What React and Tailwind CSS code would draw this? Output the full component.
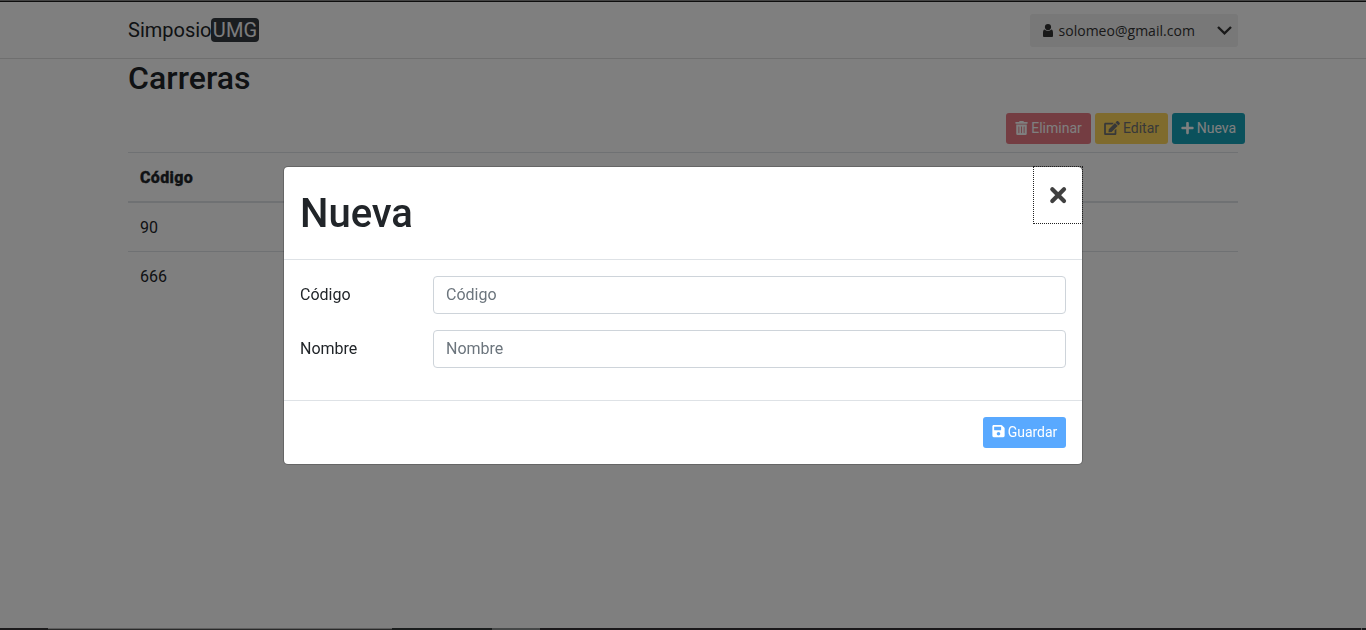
import React from "react";
import { FaTrashAlt, FaEdit, FaPlus, FaSave } from "react-icons/fa";

const rows = ["90", "666"];

function UserIcon() {
  return (
    <svg className="h-[13px] w-[10px]" viewBox="0 0 10 13" fill="#333">
      <circle cx="5" cy="3.1" r="3.1" />
      <path d="M1.600 5.600C2.400 6.500 3.600 7 5 7s2.600-.5 3.400-1.400C9.500 5.800 10 7 10 8.800V11.800c0 .8-.4 1.200-1.200 1.200H1.200C.4 13 0 12.600 0 11.800V8.800C0 7 .5 5.800 1.600 5.600z" />
    </svg>
  );
}

function Navbar() {
  return (
    <nav className="h-[57px] border-b border-[#dedede]">
      <div className="mx-auto flex h-[56px] w-[1110px] items-center justify-between">
        <div className="flex items-center text-[20px] leading-[30px]">
          <span className="w-[83px]">Simposio</span>
          <span className="flex h-6 w-12 items-center justify-center rounded bg-[#343a40] tracking-[0.1px] text-[#f8f9fa]">UMG</span>
        </div>
        <button className="flex h-[33px] w-[208px] items-center rounded-[3px] bg-[#f0f0f0] pr-[6px] pl-[13px] font-['Open_Sans',sans-serif] text-[14px] text-[#333]">
          <UserIcon />
          <span className="mt-px ml-[5.5px] tracking-[0.02px]">solomeo@gmail.com</span>
          <svg className="ml-auto h-[9px] w-[15px]" viewBox="0 0 15 9" fill="none" stroke="#333" strokeWidth="2.4">
            <path d="M1 1l6.500 6.300L14 1" />
          </svg>
        </button>
      </div>
    </nav>
  );
}

function Toolbar() {
  const base = "flex h-[31px] items-center justify-center gap-[3px] rounded-[3px] text-[14px] leading-[21px]";
  return (
    <div className="-mr-[7px] mt-4 flex justify-end gap-1">
      <button className={base + " w-[85px] bg-[#dc3545] text-white opacity-65"}><FaTrashAlt className="mb-px w-[13px]" />Eliminar</button>
      <button className={base + " w-[73px] bg-[#ffc107] text-[#212529] opacity-65"}><FaEdit className="mb-px w-[16px]" />Editar</button>
      <button className={base + " w-[73px] bg-[#17a2b8] text-white"}><FaPlus className="mb-px w-[13px]" />Nueva</button>
    </div>
  );
}

function Field({ label }) {
  return (
    <div className="mb-4 flex items-center">
      <label className="w-[133px]">{label}</label>
      <input placeholder={label} className="h-[38px] flex-1 rounded border border-[#ced4da] bg-white px-3 pb-[2px] text-[16px] placeholder:text-[#6c757d]" />
    </div>
  );
}

function Modal() {
  return (
    <div className="fixed inset-0 flex items-start justify-center bg-black/50 pt-[166px]">
      <section className="w-[800px] rounded-[5px] border border-black/20 bg-white bg-clip-padding">
        <header className="flex h-[93px] justify-between border-b border-[#dee2e6] pl-4">
          <h4 className="mt-[17px] text-[40px] leading-[60px] font-medium">Nueva</h4>
          <button aria-label="Cerrar" className="-mt-px -mr-px flex h-[58px] w-[50px] items-center justify-center border border-dotted border-[#222]">
            <svg className="h-[18px] w-[18px]" viewBox="0 0 18 18" fill="none" stroke="#404040" strokeWidth="4.2" strokeLinecap="round">
              <path d="M3.300 3.300l11.700 11.700M15 3.300L3.300 15" />
            </svg>
          </button>
        </header>
        <div className="p-4">
          <Field label="Código" />
          <Field label="Nombre" />
        </div>
        <footer className="flex justify-end border-t border-[#dee2e6] p-4">
          <button className="flex h-[31px] w-[83px] items-center justify-center gap-[3px] rounded-[3px] bg-[#59a9ff] text-[14px] leading-[21px] text-white">
            <FaSave className="mb-[3px] w-[13px]" />Guardar
          </button>
        </footer>
      </section>
    </div>
  );
}

export default function App() {
  return (
    <div className="flex h-[630px] flex-col overflow-hidden bg-white font-[Roboto,sans-serif] text-[16px] leading-6 text-[#212529]">
      <div className="h-[2px] border-b border-[#1c1c1c] bg-[#888]" />
      <Navbar />
      <main className="mx-auto w-[1110px]">
        <h2 className="text-[32px] leading-[38px] font-medium tracking-[0.06px]">Carreras</h2>
        <Toolbar />
        <div className="mt-2">
          <div className="flex h-[51px] items-center border-t border-b-2 border-[#dee2e6] px-3 pt-[2px] font-extrabold tracking-[0.35px] [-webkit-text-stroke:0.4px_#212529]">Código</div>
          {rows.map((r, i) => (
            <div key={r} className={i ? "flex h-[49px] items-center border-t border-[#dee2e6] px-3 pt-[2px]" : "flex h-[48px] items-center px-3 pt-[2px]"}>{r}</div>
          ))}
        </div>
      </main>
      <div className="mt-auto flex h-[2px]">
        <div className="w-12 bg-[#393639]" />
        <div className="w-[344px] border-t border-[#bbb] bg-[#555]" />
        <div className="w-[100px] bg-[#353b3b]" />
        <div className="w-12 bg-[#8c9191]" />
        <div className="w-[821px] bg-[#353035]" />
        <div className="w-px bg-[#aaa]" />
        <div className="flex-1 bg-[#353035]" />
      </div>
      <Modal />
    </div>
  );
}
